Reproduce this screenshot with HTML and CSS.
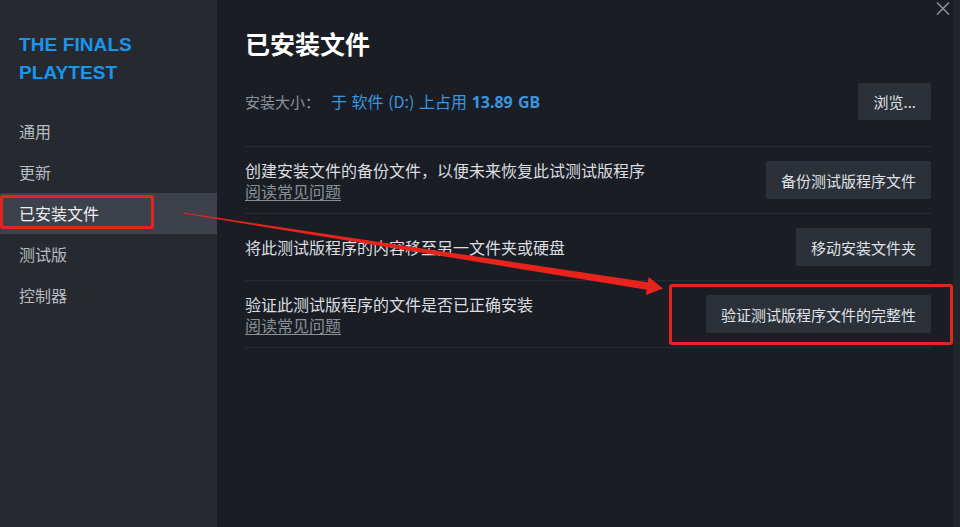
FILE: index.html
```html
<!DOCTYPE html>
<html lang="zh-CN">
<head>
<meta charset="utf-8">
<title>已安装文件</title>
<link rel="stylesheet" href="styles.css">
</head>
<body>
<div class="window">
  <aside class="sidebar">
    <div class="game-title">THE FINALS<br>PLAYTEST</div>
    <nav class="nav">
      <div class="nav-item">通用</div>
      <div class="nav-item">更新</div>
      <div class="nav-item active">已安装文件</div>
      <div class="nav-item">测试版</div>
      <div class="nav-item">控制器</div>
    </nav>
  </aside>
  <main class="content">
    <h1 class="page-title">已安装文件</h1>
    <div class="row row-size">
      <div class="size"><span class="size-label">安装大小：</span><span class="size-value">于 软件 (D:) 上占用 <b>13.89 GB</b></span></div>
      <button class="btn">浏览...</button>
    </div>
    <div class="row">
      <div class="desc">
        <div class="desc-text">创建安装文件的备份文件，以便未来恢复此试测试版程序</div>
        <a class="faq">阅读常见问题</a>
      </div>
      <button class="btn">备份测试版程序文件</button>
    </div>
    <div class="row">
      <div class="desc">
        <div class="desc-text">将此测试版程序的内容移至另一文件夹或硬盘</div>
      </div>
      <button class="btn">移动安装文件夹</button>
    </div>
    <div class="row">
      <div class="desc">
        <div class="desc-text">验证此测试版程序的文件是否已正确安装</div>
        <a class="faq">阅读常见问题</a>
      </div>
      <button class="btn">验证测试版程序文件的完整性</button>
    </div>
  </main>
  <div class="edge"></div>

  <div class="close">
    <svg width="14" height="13" viewBox="0 0 14 13"><path d="M1 0.5 L13 12.5 M13 0.5 L1 12.5" stroke="#8a8f96" stroke-width="1.6" fill="none"/></svg>
  </div>

  <div class="mark mark-nav"></div>
  <div class="mark mark-verify"></div>
  <svg class="arrow" width="960" height="527" viewBox="0 0 960 527">
    <polygon points="183.1,212.5 647.7,282.3 648.6,277.1 663,288.5 645.8,294.9 646.7,289.7 182.9,213.5" fill="#e8231b"/>
  </svg>
</div>
</body>
</html>
```
FILE: styles.css
```css
* { box-sizing: border-box; }
html, body { margin: 0; padding: 0; }
body {
  background: #1b1e25;
  font-family: "Noto Sans CJK SC", "Noto Sans", sans-serif;
  color: #dcdedf;
}
.window {
  position: relative;
  width: 960px;
  height: 527px;
  display: grid;
  grid-template-columns: 217px 1fr 7px;
  overflow: hidden;
}
.sidebar {
  background: #262930;
  padding-top: 31px;
}
.game-title {
  font-family: "Liberation Sans", Arial, sans-serif;
  font-weight: bold;
  font-size: 19px;
  line-height: 28px;
  color: #1a95ec;
  padding-left: 19px;
  letter-spacing: 0.1px;
}
.nav {
  margin-top: 24px;
  display: flex;
  flex-direction: column;
}
.nav-item {
  height: 41px;
  line-height: 41px;
  padding-left: 19px;
  font-size: 16px;
  color: #b7bbc0;
}
.nav-item.active {
  background: #3c414c;
  color: #eef0f2;
}
.content {
  background: #1a1d24;
  padding: 28px 22px 0 28px;
}
.page-title {
  margin: 0;
  font-size: 25px;
  line-height: 30px;
  font-weight: bold;
  color: #ffffff;
}
.row {
  display: flex;
  align-items: center;
  justify-content: space-between;
  padding: 11px 0;
  min-height: 67px;
  border-bottom: 1px solid #262a32;
}
.row-size {
  margin-top: 25px;
  padding: 0 0 26px 0;
  min-height: 0;
}
.size { font-size: 15px; line-height: 20px; }
.size-label { color: #8c939b; margin-right: 11px; }
.size-value { color: #3896e0; font-size: 16px; word-spacing: 1px; }
.size-value b { font-family: "Noto Sans", sans-serif; font-weight: bold; }
.desc { display: flex; flex-direction: column; }
.desc-text { font-size: 16px; line-height: 22px; color: #dcdee0; }
.faq {
  font-size: 16px;
  line-height: 21px;
  color: #8a9098;
  text-decoration: underline;
  text-underline-offset: 2px;
}
.btn {
  height: 38px;
  padding: 0 15px;
  border: none;
  border-radius: 2px;
  background: #2c3038;
  color: #dfe2e6;
  font-family: "Noto Sans CJK SC", "Noto Sans", sans-serif;
  font-size: 15px;
  white-space: nowrap;
}
.row-size .btn { height: 37px; }
.edge { background: #22252c; }
.close {
  position: absolute;
  left: 936px;
  top: 2px;
  width: 14px;
  height: 13px;
  display: flex;
}
.mark {
  position: absolute;
  border: 3px solid #e3251d;
  border-radius: 3px;
}
.mark-nav { left: 0; top: 195px; width: 154px; height: 34px; }
.mark-verify { left: 669px; top: 284px; width: 284px; height: 61px; }
.arrow { position: absolute; left: 0; top: 0; pointer-events: none; }
```
